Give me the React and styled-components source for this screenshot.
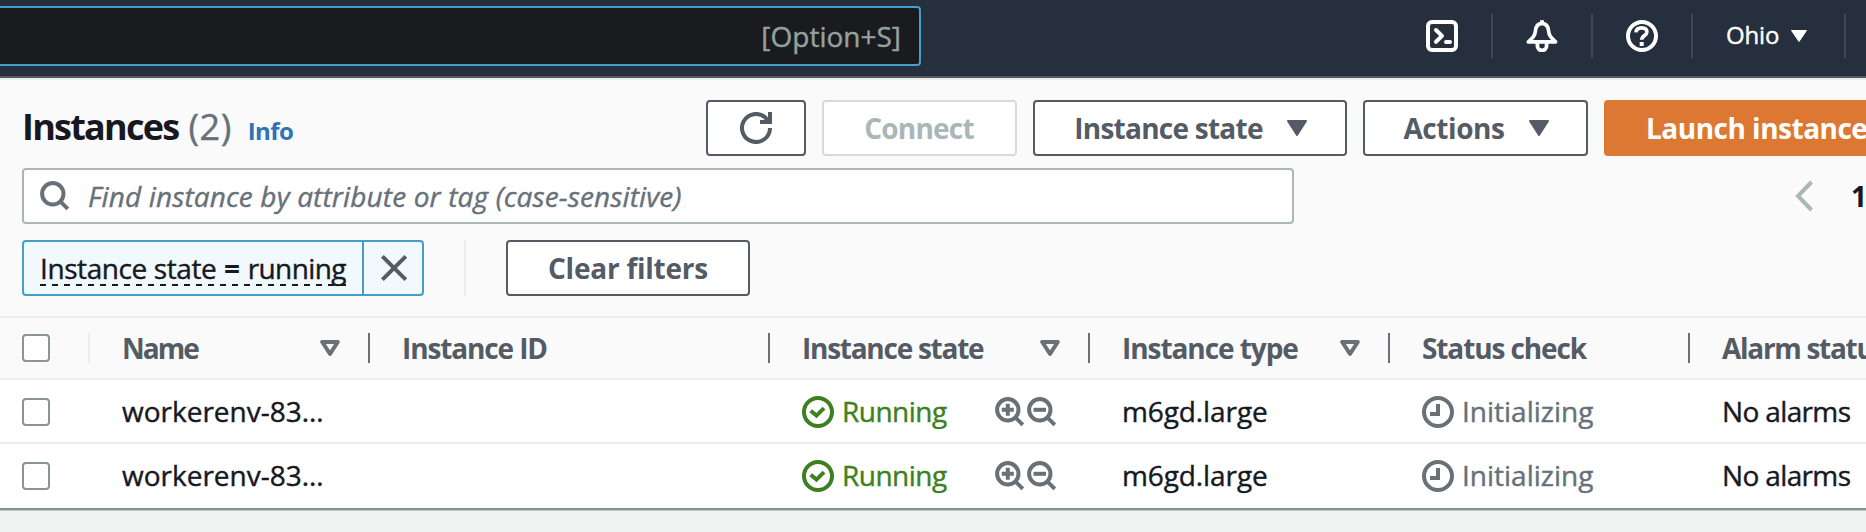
import React from "react";
import styled, { createGlobalStyle, css } from "styled-components";

const c = {
  nav: "#262f3e",
  navSearch: "#1a1b1f",
  focus: "#469fc8",
  ink: "#16191f",
  slate: "#545b64",
  grey: "#687078",
  mist: "#aab7b8",
  line: "#eaeded",
  green: "#3d8020",
  link: "#2f73b7",
  orange: "#dd7833",
};

const Global = createGlobalStyle`
  *, *::before, *::after { box-sizing: border-box; }
  html, body { margin: 0; overflow: hidden; background: #f1f3f3; }
  body {
    font-family: "Open Sans", "Noto Sans", sans-serif;
    font-size: 28px;
    line-height: 36px;
    color: ${c.ink};
  }
`;

const Page = styled.div`
  width: 100%;
  height: 100vh;
  overflow: hidden;
  display: flex;
  flex-direction: column;
  background: #f1f3f3;
`;

const regularStroke = css`
  -webkit-text-stroke: 0.4px currentColor;
`;

const Label = styled.span`
  white-space: nowrap;
  letter-spacing: ${(p) => p.$track || 0}px;
  font-weight: ${(p) => (p.$bold ? 700 : 400)};
  ${(p) => !p.$bold && regularStroke}
`;

/* ---------- navigation ---------- */

const NavBar = styled.header`
  flex: none;
  height: 78px;
  display: flex;
  justify-content: space-between;
  align-items: flex-start;
  background: ${c.nav};
  border-bottom: 2px solid ${c.slate};
`;

const NavSearch = styled.div`
  width: 921px;
  height: 60px;
  margin-top: 6px;
  padding-right: 18px;
  display: flex;
  align-items: center;
  justify-content: flex-end;
  border: 2px solid ${c.focus};
  border-left: 0;
  border-radius: 0 4px 4px 0;
  background: ${c.navSearch};
  color: #95a1a1;
`;

const NavItems = styled.nav`
  display: flex;
  margin: 14px 20px 0 0;
  color: #fff;
`;

const NavItem = styled.div`
  width: 100px;
  height: 44px;
  display: flex;
  align-items: center;
  justify-content: center;
  border-right: 2px solid #414750;
`;

const RegionItem = styled(NavItem)`
  width: 153px;
  justify-content: flex-start;
  padding: 0 0 0 33px;
  gap: 12px;
  font-size: 24px;
`;

const RegionName = styled(Label)`
  padding-bottom: 2px;
`;

/* ---------- panel header ---------- */

const Panel = styled.main`
  flex: none;
  border-top: 2px solid ${c.line};
  background: #fafafa;
`;

const TitleRow = styled.div`
  display: flex;
  padding: 20px 0 0 22px;
  height: 88px;
`;

const Title = styled.h1`
  width: 684px;
  flex: none;
  height: 54px;
  margin: 0;
  display: flex;
  align-items: baseline;
  font-size: 36px;
  line-height: 54px;
  font-weight: 400;
`;

const Count = styled(Label)`
  margin-left: 10px;
  color: ${c.grey};
`;

const InfoLink = styled(Label)`
  margin-left: 16px;
  font-size: 24px;
  color: ${c.link};
`;

const ButtonGroup = styled.div`
  display: flex;
  gap: 16px;
`;

const Button = styled.button`
  flex: none;
  width: ${(p) => p.$width}px;
  height: 56px;
  padding: 0;
  display: flex;
  align-items: center;
  justify-content: center;
  gap: 24px;
  font: inherit;
  line-height: 36px;
  border: 2px solid ${c.slate};
  border-radius: 4px;
  background: #fff;
  color: ${c.slate};
  ${(p) =>
    p.$kind === "menu" &&
    css`
      padding-left: 1px;
    `}
  ${(p) =>
    p.$kind === "disabled" &&
    css`
      padding-right: 1px;
      border-color: #d5dbdb;
      color: ${c.mist};
    `}
  ${(p) =>
    p.$kind === "primary" &&
    css`
      justify-content: flex-start;
      padding-left: 40px;
      border-color: ${c.orange};
      background: ${c.orange};
      color: #fff;
    `}
`;

const SearchRow = styled.div`
  display: flex;
  align-items: center;
  justify-content: space-between;
  height: 56px;
  padding-left: 22px;
`;

const SearchField = styled.div`
  width: 1272px;
  height: 56px;
  display: flex;
  align-items: center;
  gap: 17px;
  padding-left: 15px;
  border: 2px solid ${c.mist};
  border-radius: 4px;
  background: #fff;
  color: ${c.grey};
`;

const Placeholder = styled.span`
  font-style: italic;
  letter-spacing: 0.14px;
  white-space: nowrap;
  ${regularStroke}
`;

const Pager = styled.div`
  display: flex;
  align-items: center;
  width: 73px;
  flex: none;
  gap: 38px;
`;

const FilterRow = styled.div`
  display: flex;
  padding: 16px 0 0 22px;
  height: 92px;
`;

const Token = styled.div`
  width: 402px;
  height: 56px;
  display: flex;
  border: 2px solid ${c.focus};
  border-radius: 4px;
  background: #f2f9fd;
`;

const TokenText = styled.div`
  flex: 1;
  display: flex;
  align-items: center;
  padding: 0 16px;
  border-right: 2px solid ${c.focus};
`;

const DashedText = styled.div`
  flex: 1;
  height: 36px;
  line-height: 36px;
  display: flex;
  justify-content: space-between;
  background: repeating-linear-gradient(90deg, ${c.ink} 0 6px, transparent 6px 12px) left bottom / 100% 2px no-repeat;
`;

const TokenDismiss = styled.div`
  width: 58px;
  display: flex;
  align-items: center;
  justify-content: center;
  color: ${c.slate};
`;

const FilterDivider = styled.div`
  width: 2px;
  height: 56px;
  margin: 0 40px;
  background: ${c.line};
`;

/* ---------- table ---------- */

const columns = css`
  display: grid;
  grid-template-columns: 90px 280px 400px 320px 300px 300px 1fr;
  align-items: center;
`;

const TableHead = styled.div`
  ${columns}
  height: 64px;
  border-top: 2px solid ${c.line};
  border-bottom: 2px solid ${c.line};
  color: ${c.slate};
`;

const HeadCell = styled.div`
  height: 30px;
  display: flex;
  align-items: center;
  justify-content: space-between;
  padding: 0 28px 0 32px;
  white-space: nowrap;
  border-right: ${(p) => (p.$last ? "0" : `2px solid ${c.grey}`)};
`;

const SelectAllCell = styled(HeadCell)`
  padding: 0 0 0 22px;
  border-right-color: ${c.line};
`;

const TableRow = styled.div`
  ${columns}
  height: 64px;
  background: #fff;
  box-shadow: ${(p) => (p.$last ? "none" : `inset 0 -2px ${c.line}`)};
`;

const Cell = styled.div`
  display: flex;
  align-items: center;
  gap: 8px;
  padding-left: ${(p) => (p.$select ? 22 : 32)}px;
  color: ${(p) => p.$color || c.ink};
`;

const CellText = styled(Label)`
  padding-bottom: 2px;
`;

const StateCell = styled(Cell)`
  justify-content: space-between;
  padding-right: 32px;
`;

const Status = styled.div`
  display: flex;
  align-items: center;
  gap: 8px;
  color: ${c.green};
`;

const FilterActions = styled.div`
  display: flex;
  color: ${c.grey};
`;

const Checkbox = styled.div`
  width: 28px;
  height: 28px;
  border: 2px solid #879596;
  border-radius: 4px;
  background: #fff;
`;

const PanelEdge = styled.div`
  height: 3px;
  background: linear-gradient(#879196 0 2px, #c6cbcc 2px 3px);
`;

/* ---------- icons ---------- */

const Icon = styled.svg.attrs({ viewBox: "0 0 32 32", width: 32, height: 32 })`
  flex: none;
  display: block;
  fill: none;
  stroke: currentColor;
  stroke-width: 4;
`;

const TerminalIcon = () => (
  <Icon>
    <rect x="2" y="2" width="28" height="28" rx="4" />
    <path d="M10 10l6 5.9-6 5.9M20 22h4" strokeLinecap="round" strokeLinejoin="round" />
  </Icon>
);

const BellIcon = () => (
  <Icon strokeLinejoin="round">
    <path d="M16 3.4c-4.4.3-6.3 3.6-6.6 7.6C9 15.8 6.8 17.7 2.4 21.9h27.2C25.2 17.7 23 15.8 22.6 11c-.3-4-2.2-7.3-6.6-7.6z" strokeWidth="3.6" />
    <path d="M16 .2V3" />
    <path d="M11.4 22.5v3.3a4.6 4.6 0 0 0 9.2 0v-3.3" strokeWidth="3.8" />
  </Icon>
);

const HelpIcon = () => (
  <Icon>
    <circle cx="16" cy="16" r="14" />
    <path d="M9.9 12.4C10.2 9.3 12.5 7.9 15.6 7.9c3.2 0 5.3 1.6 5.3 4.2 0 3.6-5.1 3.3-5.2 7.7" strokeWidth="3.6" />
    <path d="M13.7 24h4" />
  </Icon>
);

const RefreshIcon = () => (
  <Icon>
    <path d="M30 16A14 14 0 1 1 25.5 5.7L28 9" />
    <path d="M30 0v10H20" />
  </Icon>
);

const MagnifierIcon = ({ sign }) => (
  <Icon>
    <circle cx="13.8" cy="13.8" r="10.7" />
    <path d="M21.3 21.3l7.5 7.5" />
    {sign && <path d={sign === "plus" ? "M7.8 13.8h12M13.8 7.8v12" : "M7.5 13.8h12.5"} />}
  </Icon>
);

const CheckIcon = () => (
  <Icon>
    <circle cx="16" cy="16" r="14" />
    <path d="M8.7 14.7l5.8 4.9 7.5-7.4" />
  </Icon>
);

const ClockIcon = () => (
  <Icon>
    <circle cx="16" cy="16" r="14" />
    <path d="M16 8v10H8" />
  </Icon>
);

const CloseIcon = () => (
  <Icon>
    <path d="M5.4 4.3l23.4 23.4M28.8 4.3L5.4 27.7" />
  </Icon>
);

const ChevronSvg = styled(Icon).attrs({ viewBox: "0 0 20 32", width: 20, height: 32 })`
  color: ${c.mist};
`;

const Solid = styled.svg`
  flex: none;
  display: block;
  fill: currentColor;
  stroke: currentColor;
  stroke-linejoin: round;
`;

const Caret = () => (
  <Solid width="20" height="16" viewBox="0 0 20 16" strokeWidth="2">
    <path d="M1 1h18L10 15z" />
  </Solid>
);

const RegionCaret = () => (
  <Solid width="16" height="12" viewBox="0 0 16 12" strokeWidth="1">
    <path d="M.5.5h15L8 11.5z" />
  </Solid>
);

const SortIcon = styled(Solid).attrs({ width: 20, height: 16, viewBox: "0 0 20 16" })`
  fill: none;
  stroke: ${c.grey};
  stroke-width: 4;
`;

const Sort = () => (
  <SortIcon>
    <path d="M2.2 2h15.6L10 13.8z" />
  </SortIcon>
);

/* ---------- data ---------- */

const headers = [
  { text: "Name", track: -2, sort: true },
  { text: "Instance ID", track: -1.12 },
  { text: "Instance state", track: -1.26, sort: true },
  { text: "Instance type", track: -1.06, sort: true },
  { text: "Status check", track: -1.12 },
  { text: "Alarm status", track: -1.3 },
];

const rows = [
  { name: "workerenv-83…", type: "m6gd.large", state: "Running", check: "Initializing", alarms: "No alarms" },
  { name: "workerenv-83…", type: "m6gd.large", state: "Running", check: "Initializing", alarms: "No alarms" },
];

export default function App() {
  return (
    <Page>
      <Global />
      <NavBar>
        <NavSearch>
          <Label>[Option+S]</Label>
        </NavSearch>
        <NavItems>
          <NavItem><TerminalIcon /></NavItem>
          <NavItem><BellIcon /></NavItem>
          <NavItem><HelpIcon /></NavItem>
          <RegionItem>
            <RegionName $track={-0.15}>Ohio</RegionName>
            <RegionCaret />
          </RegionItem>
        </NavItems>
      </NavBar>

      <Panel>
        <TitleRow>
          <Title>
            <Label $bold $track={-1.75}>Instances</Label>
            <Count $track={0.5}>(2)</Count>
            <InfoLink $bold $track={-0.6}>Info</InfoLink>
          </Title>
          <ButtonGroup>
            <Button $width={100}><RefreshIcon /></Button>
            <Button $width={195} $kind="disabled"><Label $bold $track={-0.77}>Connect</Label></Button>
            <Button $width={314} $kind="menu"><Label $bold $track={-0.75}>Instance state</Label><Caret /></Button>
            <Button $width={225} $kind="menu"><Label $bold $track={-0.43}>Actions</Label><Caret /></Button>
            <Button $width={308} $kind="primary"><Label $bold $track={-0.5}>Launch instances</Label></Button>
          </ButtonGroup>
        </TitleRow>

        <SearchRow>
          <SearchField>
            <MagnifierIcon />
            <Placeholder>Find instance by attribute or tag (case-sensitive)</Placeholder>
          </SearchField>
          <Pager>
            <ChevronSvg><path d="M18.5 2L5 16l13.5 14" /></ChevronSvg>
            <Label $bold>1</Label>
          </Pager>
        </SearchRow>

        <FilterRow>
          <Token>
            <TokenText>
              <DashedText>
                <Label $track={-0.41}>Instance state</Label>
                <Label $bold>=</Label>
                <Label $track={-0.58}>running</Label>
              </DashedText>
            </TokenText>
            <TokenDismiss><CloseIcon /></TokenDismiss>
          </Token>
          <FilterDivider />
          <Button $width={244}><Label $bold $track={-0.24}>Clear filters</Label></Button>
        </FilterRow>

        <TableHead>
          <SelectAllCell><Checkbox /></SelectAllCell>
          {headers.map((h, i) => (
            <HeadCell key={h.text} $last={i === headers.length - 1}>
              <Label $bold $track={h.track}>{h.text}</Label>
              {h.sort && <Sort />}
            </HeadCell>
          ))}
        </TableHead>
        {rows.map((r, i) => (
          <TableRow key={i} $last={i === rows.length - 1}>
            <Cell $select><Checkbox /></Cell>
            <Cell><CellText>{r.name}</CellText></Cell>
            <Cell />
            <StateCell>
              <Status><CheckIcon /><CellText $track={-0.51}>{r.state}</CellText></Status>
              <FilterActions><MagnifierIcon sign="plus" /><MagnifierIcon sign="minus" /></FilterActions>
            </StateCell>
            <Cell><CellText $track={-0.1}>{r.type}</CellText></Cell>
            <Cell $color={c.grey}><ClockIcon /><CellText>{r.check}</CellText></Cell>
            <Cell><CellText $track={-0.64}>{r.alarms}</CellText></Cell>
          </TableRow>
        ))}
        <PanelEdge />
      </Panel>
    </Page>
  );
}
